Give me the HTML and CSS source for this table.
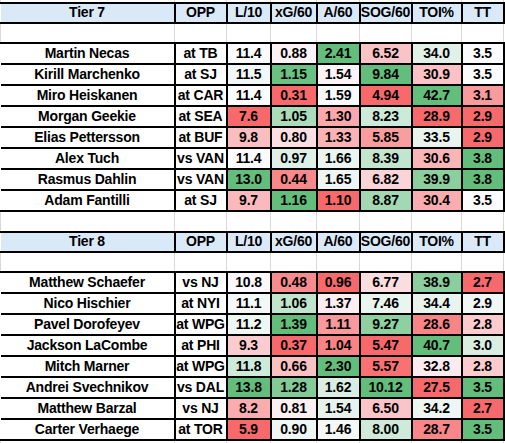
FILE: index.html
```html
<!DOCTYPE html>
<html lang="en">
<head>
  <meta charset="UTF-8" />
  <meta name="viewport" content="width=device-width, initial-scale=1.0" />
  <title>Tiers</title>
  <link rel="stylesheet" href="styles.css">
</head>
<body>
  <table class="sheet">
    <colgroup>
      <col class="c-name">
      <col class="c-opp">
      <col class="c-l10">
      <col class="c-xg">
      <col class="c-a">
      <col class="c-sog">
      <col class="c-toi">
      <col class="c-tt">
    </colgroup>

    <tbody>
      <tr class="edge"><td></td><td></td><td></td><td></td><td></td><td></td><td></td><td></td></tr>
    </tbody>

    <tbody class="tier">
      <tr class="head">
        <th>Tier 7</th><th>OPP</th><th>L/10</th><th>xG/60</th><th>A/60</th><th>SOG/60</th><th>TOI%</th><th>TT</th>
      </tr>
      <tr class="blank"><td></td><td></td><td></td><td></td><td></td><td></td><td></td><td></td></tr>
      <tr><td>Martin Necas</td><td>at TB</td><td class="n">11.4</td><td class="n">0.88</td><td class="n">2.41</td><td class="n">6.52</td><td class="n">34.0</td><td class="n">3.5</td></tr>
      <tr><td>Kirill Marchenko</td><td>at SJ</td><td class="n">11.5</td><td class="n">1.15</td><td class="n">1.54</td><td class="n">9.84</td><td class="n">30.9</td><td class="n">3.5</td></tr>
      <tr><td>Miro Heiskanen</td><td>at CAR</td><td class="n">11.4</td><td class="n">0.31</td><td class="n">1.59</td><td class="n">4.94</td><td class="n">42.7</td><td class="n">3.1</td></tr>
      <tr><td>Morgan Geekie</td><td>at SEA</td><td class="n">7.6</td><td class="n">1.05</td><td class="n">1.30</td><td class="n">8.23</td><td class="n">28.9</td><td class="n">2.9</td></tr>
      <tr><td>Elias Pettersson</td><td>at BUF</td><td class="n">9.8</td><td class="n">0.80</td><td class="n">1.33</td><td class="n">5.85</td><td class="n">33.5</td><td class="n">2.9</td></tr>
      <tr><td>Alex Tuch</td><td>vs VAN</td><td class="n">11.4</td><td class="n">0.97</td><td class="n">1.66</td><td class="n">8.39</td><td class="n">30.6</td><td class="n">3.8</td></tr>
      <tr><td>Rasmus Dahlin</td><td>vs VAN</td><td class="n">13.0</td><td class="n">0.44</td><td class="n">1.65</td><td class="n">6.82</td><td class="n">39.9</td><td class="n">3.8</td></tr>
      <tr><td>Adam Fantilli</td><td>at SJ</td><td class="n">9.7</td><td class="n">1.16</td><td class="n">1.10</td><td class="n">8.87</td><td class="n">30.4</td><td class="n">3.5</td></tr>
    </tbody>

    <tbody>
      <tr class="blank gap"><td></td><td></td><td></td><td></td><td></td><td></td><td></td><td></td></tr>
    </tbody>

    <tbody class="tier">
      <tr class="head">
        <th>Tier 8</th><th>OPP</th><th>L/10</th><th>xG/60</th><th>A/60</th><th>SOG/60</th><th>TOI%</th><th>TT</th>
      </tr>
      <tr class="blank"><td></td><td></td><td></td><td></td><td></td><td></td><td></td><td></td></tr>
      <tr><td>Matthew Schaefer</td><td>vs NJ</td><td class="n">10.8</td><td class="n">0.48</td><td class="n">0.96</td><td class="n">6.77</td><td class="n">38.9</td><td class="n">2.7</td></tr>
      <tr><td>Nico Hischier</td><td>at NYI</td><td class="n">11.1</td><td class="n">1.06</td><td class="n">1.37</td><td class="n">7.46</td><td class="n">34.4</td><td class="n">2.9</td></tr>
      <tr><td>Pavel Dorofeyev</td><td>at WPG</td><td class="n">11.2</td><td class="n">1.39</td><td class="n">1.11</td><td class="n">9.27</td><td class="n">28.6</td><td class="n">2.8</td></tr>
      <tr><td>Jackson LaCombe</td><td>at PHI</td><td class="n">9.3</td><td class="n">0.37</td><td class="n">1.04</td><td class="n">5.47</td><td class="n">40.7</td><td class="n">3.0</td></tr>
      <tr><td>Mitch Marner</td><td>at WPG</td><td class="n">11.8</td><td class="n">0.66</td><td class="n">2.30</td><td class="n">5.57</td><td class="n">32.8</td><td class="n">2.8</td></tr>
      <tr><td>Andrei Svechnikov</td><td>vs DAL</td><td class="n">13.8</td><td class="n">1.28</td><td class="n">1.62</td><td class="n">10.12</td><td class="n">27.5</td><td class="n">3.5</td></tr>
      <tr><td>Matthew Barzal</td><td>vs NJ</td><td class="n">8.2</td><td class="n">0.81</td><td class="n">1.54</td><td class="n">6.50</td><td class="n">34.2</td><td class="n">2.7</td></tr>
      <tr><td>Carter Verhaege</td><td>at TOR</td><td class="n">5.9</td><td class="n">0.90</td><td class="n">1.46</td><td class="n">8.00</td><td class="n">28.7</td><td class="n">3.5</td></tr>
    </tbody>

    <tbody>
      <tr class="blank gap"><td></td><td></td><td></td><td></td><td></td><td></td><td></td><td></td></tr>
    </tbody>
  </table>

  <script>
    // colour scale like Excel: red (min) - white (median) - green (max), per tier and column
    const low = [248, 105, 107];
    const mid = [252, 252, 255];
    const high = [99, 190, 123];

    function median(list) {
      const s = [...list].sort((a, b) => a - b);
      const h = Math.floor(s.length / 2);
      return s.length % 2 ? s[h] : (s[h - 1] + s[h]) / 2;
    }

    function mix(a, b, t) {
      return a.map((v, i) => Math.round(v + (b[i] - v) * t));
    }

    document.querySelectorAll(".tier").forEach(tier => {
      const rows = [...tier.querySelectorAll("tr")].filter(r => r.querySelector(".n"));
      for (let col = 2; col < 8; col++) {
        const cells = rows.map(r => r.children[col]);
        const vals = cells.map(c => parseFloat(c.textContent));
        const min = Math.min(...vals);
        const max = Math.max(...vals);
        const med = median(vals);
        cells.forEach((cell, i) => {
          const v = vals[i];
          let rgb;
          if (v <= med) {
            rgb = med === min ? mid : mix(low, mid, (v - min) / (med - min));
          } else {
            rgb = mix(mid, high, (v - med) / (max - med));
          }
          cell.style.backgroundColor = `rgb(${rgb.join(",")})`;
        });
      }
    });
  </script>
</body>
</html>
```

FILE: styles.css
```css
body {
  margin: 0;
  background-color: #fff;
  color: #000;
  font-family: "Liberation Sans", Arial, sans-serif;
}

.sheet {
  border-collapse: collapse;
  table-layout: fixed;
  width: 503px;
}

.c-name { width: 174px; }
.c-opp { width: 52px; }
.c-l10 { width: 44px; }
.c-xg { width: 46px; }
.c-a { width: 43px; }
.c-sog { width: 52px; }
.c-toi { width: 50px; }
.c-tt { width: 42px; }

.sheet th,
.sheet td {
  border: 2px solid #000;
  padding: 0 0 2px;
  height: 21px;
  text-align: center;
  vertical-align: bottom;
  font-size: 14px;
  font-weight: bold;
  letter-spacing: -0.2px;
  line-height: 16px;
  white-space: nowrap;
  box-sizing: border-box;
}

.sheet th:first-child,
.sheet td:first-child {
  border-left: none;
}

.head th {
  background-color: #dae9f8;
  height: 20px;
}

.sheet .blank td,
.sheet .edge td {
  border-top: none;
  border-bottom: none;
  border-left: 1px solid #d9d9d9;
  border-right: 1px solid #d9d9d9;
  height: 20px;
  padding: 0;
}

.sheet .gap td {
  height: 21px;
}

.sheet .edge td {
  height: 3px;
}
```
